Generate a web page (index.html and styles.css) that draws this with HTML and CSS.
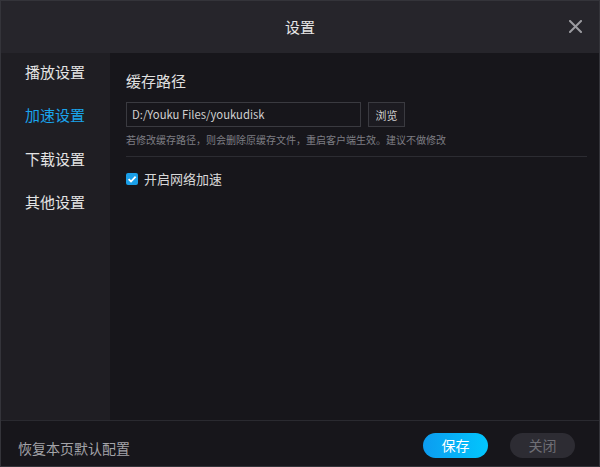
FILE: index.html
```html
<!DOCTYPE html>
<html lang="zh-CN">
<head>
<meta charset="utf-8">
<title>设置</title>
<link rel="stylesheet" href="styles.css">
</head>
<body>
<div class="window">
  <header class="titlebar">
    <span class="spacer"></span>
    <h1 class="title">设置</h1>
    <button class="close" aria-label="关闭">
      <svg width="13" height="13" viewBox="0 0 13 13"><path d="M1 1 L12 12 M12 1 L1 12" stroke="#9b9ba0" stroke-width="2" stroke-linecap="square"/></svg>
    </button>
  </header>
  <div class="body">
    <nav class="sidebar">
      <a class="nav-item">播放设置</a>
      <a class="nav-item active">加速设置</a>
      <a class="nav-item">下载设置</a>
      <a class="nav-item">其他设置</a>
    </nav>
    <main class="content">
      <h2 class="section-title">缓存路径</h2>
      <div class="path-row">
        <div class="path-input">D:/Youku Files/youkudisk</div>
        <button class="browse">浏览</button>
      </div>
      <p class="hint">若修改缓存路径，则会删除原缓存文件，重启客户端生效。建议不做修改</p>
      <div class="divider"></div>
      <label class="check-row">
        <span class="checkbox">
          <svg width="12" height="12" viewBox="0 0 12 12"><path d="M2.6 6.2 L5 8.5 L9.6 3.6" fill="none" stroke="#fff" stroke-width="1.8"/></svg>
        </span>
        <span class="check-label">开启网络加速</span>
      </label>
    </main>
  </div>
  <footer class="footer">
    <span class="reset">恢复本页默认配置</span>
    <div class="actions">
      <button class="btn btn-primary">保存</button>
      <button class="btn btn-secondary">关闭</button>
    </div>
  </footer>
</div>
</body>
</html>
```

FILE: styles.css
```css
* { box-sizing: border-box; }
html, body { margin: 0; padding: 0; }
body {
  background: #17161b;
  font-family: "Noto Sans CJK SC", "Noto Sans", sans-serif;
}
.window {
  width: 600px;
  height: 467px;
  border: 1px solid #34343a;
  background: #17161b;
  display: flex;
  flex-direction: column;
}
.titlebar {
  height: 52px;
  flex: none;
  background: #26252b;
  display: grid;
  grid-template-columns: 1fr auto 1fr;
  align-items: center;
  padding: 0 17px 0 17px;
}
.title {
  margin: 0;
  font-size: 15px;
  font-weight: normal;
  color: #e6e6e6;
  line-height: 20px;
}
.close {
  justify-self: end;
  background: none;
  border: 0;
  padding: 0;
  width: 13px;
  height: 13px;
  display: block;
  margin-top: -1px;
}
.close svg { display: block; }
.body {
  flex: 1;
  display: flex;
  min-height: 0;
}
.sidebar {
  width: 109px;
  flex: none;
  background: #1f1e23;
  padding-top: 7.5px;
  display: flex;
  flex-direction: column;
  gap: 21.5px;
}
.nav-item {
  padding-left: 24px;
  font-size: 15px;
  line-height: 22px;
  color: #e4e4e4;
}
.nav-item.active { color: #1aa4ec; }
.content {
  flex: 1;
  padding: 17.5px 12px 0 16px;
}
.section-title {
  margin: 0;
  font-size: 15px;
  font-weight: normal;
  line-height: 20px;
  color: #e0e0e0;
}
.path-row {
  margin-top: 11.5px;
  display: flex;
  gap: 7px;
}
.path-input {
  width: 235px;
  height: 25px;
  border: 1px solid #3a3a40;
  background: #17161b;
  color: #cfcfcf;
  font-size: 11.3px;
  line-height: 23px;
  padding-left: 5px;
}
.browse {
  width: 37px;
  height: 25px;
  border: 1px solid #3a3a40;
  background: #1c1b21;
  color: #d0d0d0;
  font-family: inherit;
  font-size: 11px;
  padding: 0;
}
.hint {
  margin: 5.5px 0 0;
  font-size: 10px;
  line-height: 14px;
  color: #7e7e84;
}
.divider {
  margin-top: 9.5px;
  height: 1px;
  background: #2c2c32;
}
.check-row {
  margin-top: 13px;
  display: flex;
  align-items: center;
  gap: 6px;
  height: 18px;
}
.checkbox {
  width: 12px;
  height: 12px;
  border-radius: 2px;
  background: #1a9fe8;
  display: block;
}
.checkbox svg { display: block; }
.check-label {
  font-size: 13px;
  line-height: 18px;
  color: #d8d8d8;
}
.footer {
  height: 46px;
  flex: none;
  border-top: 1px solid #2a2a30;
  background: #17161b;
  display: flex;
  align-items: center;
  justify-content: space-between;
  padding: 3px 24px 0 17px;
}
.reset {
  font-size: 14px;
  line-height: 18px;
  color: #a3a3a8;
  margin-top: 5px;
}
.actions {
  display: flex;
  gap: 22px;
}
.btn {
  width: 65px;
  height: 25px;
  border: 0;
  border-radius: 13px;
  font-family: inherit;
  font-size: 14px;
  line-height: 25px;
  padding: 0;
}
.btn-primary {
  background: linear-gradient(90deg, #0c9cf0, #02c6fd);
  color: #ffffff;
}
.btn-secondary {
  background: #2d2c33;
  color: #6f6f76;
}
```
